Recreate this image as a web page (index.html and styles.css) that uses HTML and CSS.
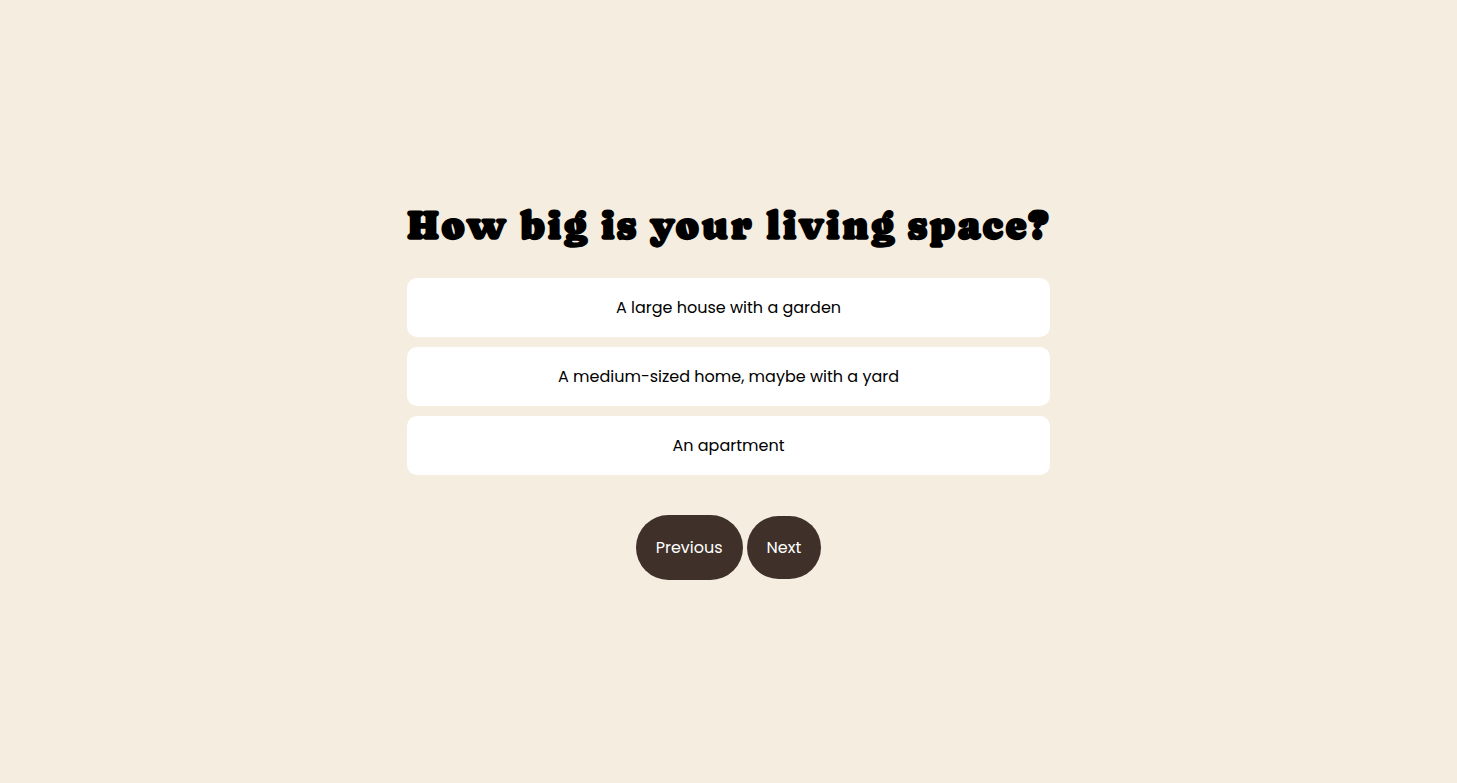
FILE: index.html
```
<!DOCTYPE html>
<html lang="en">
<head>
<meta charset="utf-8">
<meta name="viewport" content="width=device-width, initial-scale=1">
<title>How big is your living space?</title>
<link rel="stylesheet" href="styles.css">
</head>
<body class="page">
<main class="quiz">
  <h1 class="question">How big is your living space?</h1>
  <div class="options">
    <button class="option" type="button">A large house with a garden</button>
    <button class="option" type="button">A medium-sized home, maybe with a yard</button>
    <button class="option" type="button">An apartment</button>
  </div>
  <nav class="actions">
    <button class="action action-previous" type="button">Previous</button>
    <button class="action" type="button">Next</button>
  </nav>
</main>
</body>
</html>
```
FILE: styles.css
```
* {
  box-sizing: border-box;
}

.page {
  margin: 0;
  min-height: 100vh;
  display: flex;
  align-items: center;
  justify-content: center;
  background: #f5ede0;
  color: #000;
  font-family: Poppins, Inter, sans-serif;
  font-size: 16px;
  line-height: 24px;
}

.question {
  margin: 0 0 27px;
  font-family: Caprasimo, "DejaVu Serif", serif;
  font-size: 40px;
  font-weight: 700;
  line-height: 52px;
  letter-spacing: 2px;
  text-align: center;
}

.options {
  display: flex;
  flex-direction: column;
  gap: 10px;
}

.option {
  padding: 18px 20px 17px;
  border: 0;
  border-radius: 10px;
  background: #fff;
  color: inherit;
  font: inherit;
  cursor: pointer;
}

.actions {
  display: flex;
  align-items: center;
  justify-content: center;
  gap: 4px;
  margin: 40px 0 5px;
}

.action {
  padding: 20px 20px 19px;
  border: 0;
  border-radius: 50px;
  background: #3f312a;
  color: #fff;
  font: inherit;
  cursor: pointer;
}

.action-previous {
  padding: 21px 20px 20px;
}
```
